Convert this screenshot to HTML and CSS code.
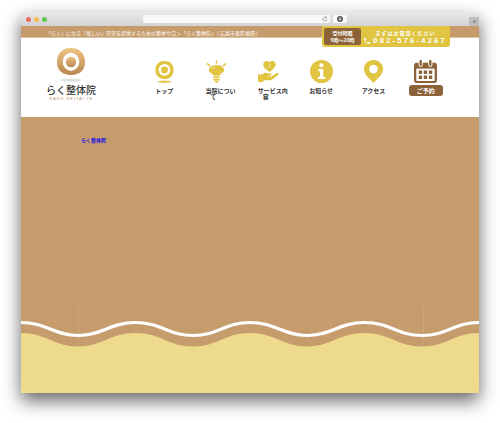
FILE: index.html
```html
<!DOCTYPE html>
<html lang="ja">
<head>
<meta charset="utf-8">
<title>らく整体院</title>
<link rel="stylesheet" href="styles.css">
</head>
<body>
<div class="window">
  <div class="chrome">
    <div class="lights"><span class="light red"></span><span class="light amber"></span><span class="light green"></span></div>
    <div class="address">
      <svg class="reload" viewBox="0 0 12 12" aria-hidden="true"><path d="M10 6a4 4 0 1 1-1.500-3.100M6.500 3.300h2.500V.8" fill="none" stroke="#777" stroke-width="1.200"/></svg>
    </div>
    <button class="download" aria-label="ダウンロード"><svg viewBox="0 0 12 12" aria-hidden="true"><circle cx="6" cy="6" r="6" fill="#5b5b5d"/><path d="M6 2.500v5M3.500 5.500 6 8.500l2.500-3" fill="none" stroke="#fff" stroke-width="1.500"/></svg></button>
    <button class="newtab" aria-label="新規タブ"><svg viewBox="0 0 10 10" aria-hidden="true"><path d="M5 1v8M1 5h8" stroke="#77777a" stroke-width="1.300"/></svg></button>
  </div>
  <div class="topbar">
    <p class="tagline">「らく」になる「楽しい」日常を提供するための整体サロン「らく整体院」 ( 広島市東区福田 )</p>
    <div class="contact">
      <div class="hours">受付時間<br>9時〜20時</div>
      <div class="call">
        <div class="callnote">まずはお電話ください</div>
        <a class="phone" href="tel:082-576-4267"><svg viewBox="0 0 24 24" aria-hidden="true"><path d="M6.600 10.800c1.400 2.800 3.800 5.100 6.600 6.600l2.200-2.200c.3-.3.7-.4 1-.2 1.100.4 2.300.6 3.600.6.600 0 1 .4 1 1V20c0 .6-.4 1-1 1C10.600 21 3 13.400 3 4c0-.6.500-1 1-1h3.500c.6 0 1 .4 1 1 0 1.300.2 2.500.6 3.600.1.300 0 .7-.2 1z" fill="#fff"/></svg>082-576-4267</a>
      </div>
    </div>
  </div>
  <header class="header">
    <a class="logo" href="#">
      <svg class="mark" viewBox="0 0 30 34" aria-hidden="true">
        <defs><linearGradient id="g" x1="0" y1="0" x2="0" y2="1"><stop offset="0" stop-color="#eec583"/><stop offset="1" stop-color="#b9854f"/></linearGradient></defs>
        <path fill="url(#g)" fill-rule="evenodd" d="M15 0C24 0 29 6 29 14S24 27 15 27 1 22 1 14 6 0 15 0zM15 4.500A9.300 9.300 0 0 0 15 23A9.300 9.300 0 0 0 15 4.500z"/>
        <circle cx="15" cy="14" r="5.200" fill="url(#g)"/>
        <ellipse cx="15" cy="32.200" rx="10.500" ry="1.600" fill="#dce1df"/>
      </svg>
      <span class="name">らく整体院</span>
      <span class="roman">RAKU SEITAI IN</span>
    </a>
    <nav class="nav">
      <a class="item" href="#"><svg viewBox="0 0 24 24" aria-hidden="true"><path fill="#e1c441" fill-rule="evenodd" d="M12 1C18 1 21.500 4.500 21.500 10.300S18 20 12 20 2.500 16 2.500 10.300 6 1 12 1zM12 4.300A6.100 6.100 0 0 0 12 16.500A6.100 6.100 0 0 0 12 4.300z"/><circle cx="12" cy="10.400" r="3.600" fill="#e1c441"/><ellipse cx="12" cy="22.600" rx="7" ry="1.100" fill="#e1c441"/></svg><span>トップ</span></a>
      <a class="item wrap" href="#"><svg viewBox="0 0 24 24" aria-hidden="true"><path fill="#e1c441" d="M12 5.500c-5 0-8 2.200-8 5.200 0 2.800 4.700 3.300 4.700 5.800h6.600c0-2.500 4.700-3 4.700-5.800 0-3-3-5.200-8-5.200zM8.700 17.300h6.600v1.700H8.700zM8.700 19.700h6.600v1.700H8.700zM10 22h4l-1 1.700h-2z"/><path d="M12 .5v3.500M2 3.500l3.500 3M22 3.500l-3.500 3" stroke="#e1c441" stroke-width="1.500"/><path d="M7 10c.3-1.300 1.500-2 3-2.300" fill="none" stroke="#fff" stroke-width=".8"/></svg><span>当院について</span></a>
      <a class="item wrap" href="#"><svg viewBox="0 0 24 24" aria-hidden="true"><path fill="#e1c441" d="M13 12.500C9 9.500 6.500 7.500 6.500 4.700 6.500 1 11 0 13 2.500c2-2.500 6.500-1.500 6.500 2.200 0 2.800-2.500 4.800-6.500 7.800zM1 15h3.500l3-1.500c2-.8 3.500.7 5.500.7 2.800-.2 2.800 2 .5 2.300L10 17l5 .2 5.500-3.600c1.500-.8 3 .4 1.700 1.700L16.500 20c-1.200.9-2.500 1-4 1H8l-2.500 2H1z"/><path d="m12.500 3.500 1.200 2-1.500 1.500 1.200 1.500" fill="none" stroke="#fff" stroke-width=".5"/></svg><span>サービス内容</span></a>
      <a class="item" href="#"><svg viewBox="0 0 24 24" aria-hidden="true"><circle cx="12" cy="12" r="12" fill="#e1c441"/><circle cx="12" cy="5.500" r="2.200" fill="#fff"/><path d="M8.500 9.500h5.300v8h2v2.300H8.300v-2.300h2.100v-5.700H8.500z" fill="#fff"/></svg><span>お知らせ</span></a>
      <a class="item" href="#"><svg viewBox="0 0 24 24" aria-hidden="true"><path fill="#e1c441" fill-rule="evenodd" d="M12 0c5.700 0 10 4.200 10 9.500C22 15.500 15.500 20 12 24 8.500 20 2 15.500 2 9.500 2 4.200 6.300 0 12 0zm0 5a4.500 4.500 0 1 0 0 9 4.500 4.500 0 0 0 0-9z"/></svg><span>アクセス</span></a>
      <a class="item reserve" href="#"><svg viewBox="0 0 24 24" aria-hidden="true"><rect x="1.200" y="4" width="21.600" height="19" rx="2" fill="none" stroke="#8c6239" stroke-width="2.400"/><path d="M1 3h22v6H1z" fill="#8c6239"/><path d="M7 2v3M17 2v3" stroke="#fff" stroke-width="4.500" stroke-linecap="round"/><path d="M7 1v4M17 1v4" stroke="#8c6239" stroke-width="2.500" stroke-linecap="round"/><path d="M5 11h3.500v3.500H5zm5.200 0h3.500v3.500h-3.500zm5.300 0H19v3.500h-3.500zM5 16.300h3.500v3.500H5zm5.200 0h3.500v3.500h-3.500zm5.300 0H19v3.500h-3.500z" fill="#8c6239"/></svg><span>ご予約</span></a>
    </nav>
  </header>
  <main class="hero">
    <a class="title" href="#">らく整体院</a>
    <svg class="waves" viewBox="0 0 458 86" preserveAspectRatio="none" aria-hidden="true">
      <path d="M57.500 0V38M402.500 0V38" stroke="#cda67b"/>
      <path fill="#eeda8d" d="M0 26C25 26 33 39.500 57 39.500S89 26 114.500 26 147 39.500 172 39.500 204 26 229 26 262 39.500 286 39.500 318 26 343.500 26 376 39.500 401 39.500 433 26 458 26V86H0z"/>
      <path fill="none" stroke="#fff" stroke-width="3.200" d="M0 15.500C25 15.500 33 28.500 57 28.500S89 15.500 114.500 15.500 147 28.500 172 28.500 204 15.500 229 15.500 262 28.500 286 28.500 318 15.500 343.500 15.500 376 28.500 401 28.500 433 15.500 458 15.500"/>
    </svg>
  </main>
</div>
</body>
</html>
```
FILE: styles.css
```css
* { box-sizing: border-box; }
body {
  margin: 0;
  min-height: 100vh;
  padding: 12px 21px 30px;
  display: flex;
  background: #fff;
  color: #333;
  font-family: "Noto Sans CJK JP", sans-serif;
  font-size: 6px;
  line-height: 6px;
}
a { color: inherit; text-decoration: none; }
svg { display: block; }
button { border: 0; padding: 0; }
.window {
  flex: 1;
  display: flex;
  flex-direction: column;
  border-radius: 3px 3px 0 0;
  background: #fff;
  box-shadow: 0 8px 18px rgba(0, 0, 0, .6);
}
.chrome {
  display: grid;
  grid-template-columns: 119px minmax(0, 1fr) 14px 129px;
  align-items: center;
  height: 14px;
  column-gap: 3px;
  border-radius: 3px 3px 0 0;
  background: linear-gradient(#e9e9eb, #d3d3d5);
}
.lights { display: flex; gap: 3px; padding-left: 5px; }
.light { width: 5px; height: 5px; border-radius: 50%; }
.red { background: #ee6a5f; }
.amber { background: #f5be4f; }
.green { background: #62c554; }
.address {
  display: flex;
  justify-content: flex-end;
  align-items: center;
  height: 8px;
  padding-right: 2px;
  border-radius: 2px;
  background: #f8f8f8;
}
.reload { width: 6px; height: 6px; }
.download {
  display: flex;
  align-items: center;
  justify-content: center;
  height: 8px;
  border-radius: 2px;
  background: #f8f8f8;
}
.download svg { width: 6px; height: 6px; }
.newtab {
  display: flex;
  align-items: center;
  justify-content: center;
  justify-self: end;
  align-self: end;
  width: 10px;
  height: 9px;
  background: #bebec0;
}
.newtab svg { width: 5px; height: 5px; }
.topbar {
  display: flex;
  justify-content: space-between;
  height: 12px;
  padding: 0 29px 0 25px;
  border-bottom: 1px solid #dfc5a8;
  background: #c69c6d;
}
.tagline {
  margin: 0;
  color: #fff;
  font-size: 5px;
  line-height: 13px;
  white-space: nowrap;
}
.contact {
  display: flex;
  gap: 2px;
  width: 128px;
  height: 21px;
  padding: 2px;
  border-radius: 0 0 3px 3px;
  background: #e1c441;
  color: #fff;
  font-weight: 700;
}
.hours {
  width: 37px;
  height: 17px;
  padding-top: 1px;
  border-radius: 2px;
  background: #8c6239;
  font-size: 5px;
  line-height: 7px;
  text-align: center;
}
.call { flex: 1; }
.callnote { padding-top: 1px; font-size: 5px; line-height: 7px; text-align: center; letter-spacing: 1px; }
.phone {
  display: flex;
  align-items: center;
  gap: 2px;
  font-family: "Liberation Sans", sans-serif;
  font-size: 8px;
  line-height: 9px;
  letter-spacing: 2px;
}
.phone svg { width: 8px; height: 8px; }
.header {
  display: flex;
  justify-content: space-between;
  height: 79px;
  padding: 10px 27px 0 23px;
}
.logo { display: flex; flex-direction: column; align-items: center; width: 54px; }
.mark { width: 30px; height: 34px; }
.name { margin-top: 1px; font-size: 10px; line-height: 14px; font-weight: 500; }
.roman {
  color: #b38a63;
  font-family: "Liberation Sans", sans-serif;
  font-size: 4px;
  line-height: 4px;
  letter-spacing: 1px;
  white-space: nowrap;
}
.nav {
  display: grid;
  grid-template-columns: repeat(6, minmax(0, 1fr));
  width: 314px;
  padding-top: 12px;
  font-weight: 700;
}
.item { display: flex; flex-direction: column; align-items: center; gap: 5px; }
.item svg { width: 23px; height: 23px; }
.wrap span { width: 34px; padding-left: 5px; margin-left: 12px; text-indent: -5px; }
.reserve { gap: 2px; }
.reserve span {
  width: 34px;
  border-radius: 3px;
  background: #8c6239;
  color: #fff;
  line-height: 11px;
  text-align: center;
}
.hero {
  flex: 1;
  display: flex;
  flex-direction: column;
  justify-content: space-between;
  background: #c69c6d;
}
.title {
  align-self: flex-start;
  margin: 20px 0 0 60px;
  color: #1a10e0;
  font-size: 5px;
  font-weight: 700;
}
.waves { width: 100%; height: 86px; }
```
